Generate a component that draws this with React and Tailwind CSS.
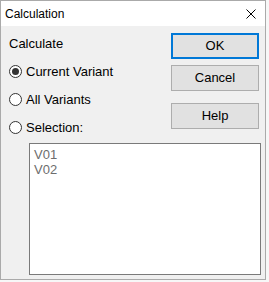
import React, { useState } from 'react';

const font = { fontFamily: '"Liberation Sans", Arial, sans-serif' };

const Radio = ({ checked, label, onClick }) => (
  <button
    type="button"
    onClick={onClick}
    className="flex items-center h-[16px] text-[13px] text-black leading-none"
  >
    <span className="w-[13px] h-[13px] rounded-full border border-[#333333] bg-white flex items-center justify-center mr-[4px]">
      {checked && <span className="w-[7px] h-[7px] rounded-full bg-[#333333]" />}
    </span>
    <span>{label}</span>
  </button>
);

const WinButton = ({ children, primary }) => (
  <button
    type="button"
    className={
      primary
        ? 'w-[88px] h-[26px] bg-[#e1e1e1] border-2 border-[#0078d7] text-[13px] text-black'
        : 'w-[88px] h-[26px] bg-[#e1e1e1] border border-[#adadad] text-[13px] text-black'
    }
  >
    {children}
  </button>
);

export default function App() {
  const [mode, setMode] = useState('current');
  const variants = ['V01', 'V02'];

  return (
    <div className="w-[269px] h-[282px] bg-[#f7f7f7]" style={font}>
      <div className="w-[266px] h-[280px] border border-[#aaaaaa] flex flex-col bg-[#f0f0f0]">
        {/* title bar */}
        <div className="h-[25px] bg-white flex items-center justify-between pl-[4px] pr-[9px]">
          <span className="text-[12px] text-black">Calculation</span>
          <svg width="10" height="10" viewBox="0 0 10 10" className="mt-[1px]">
            <path d="M0.5 0.5 L9.5 9.5 M9.5 0.5 L0.5 9.5" stroke="#000" strokeWidth="1" />
          </svg>
        </div>

        {/* body */}
        <div className="flex-1 pl-[8px] pr-[5px]">
          <div className="flex">
            <div className="flex flex-col pt-[10px]">
              <div className="text-[13px] h-[16px] leading-[16px] text-black">Calculate</div>
              <div className="flex flex-col gap-[12px] mt-[11px]">
                <Radio checked={mode === 'current'} label="Current Variant" onClick={() => setMode('current')} />
                <Radio checked={mode === 'all'} label="All Variants" onClick={() => setMode('all')} />
                <Radio checked={mode === 'selection'} label="Selection:" onClick={() => setMode('selection')} />
              </div>
            </div>
            <div className="ml-auto flex flex-col pt-[7px] mr-[1px]">
              <WinButton primary>OK</WinButton>
              <div className="mt-[6px]"><WinButton>Cancel</WinButton></div>
              <div className="mt-[12px]"><WinButton>Help</WinButton></div>
            </div>
          </div>
          <div className="ml-[20px] mt-[8px] w-[232px] h-[132px] bg-white border border-[#7a7a7a] pt-[3px] pl-[4px]">
            {variants.map((v) => (
              <div key={v} className="text-[13px] leading-[15px] text-[#6d6d6d]">{v}</div>
            ))}
          </div>
        </div>
      </div>
    </div>
  );
}
